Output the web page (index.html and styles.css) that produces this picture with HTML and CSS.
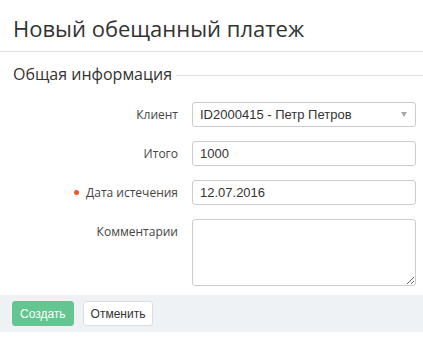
FILE: index.html
```
<!DOCTYPE html>
<html>
<head>
    <meta charset="utf-8">
    <title>Новый обещанный платеж</title>
    <link rel="stylesheet" href="styles.css">
</head>
<body>
<h1 class="pageTitle">Новый обещанный платеж</h1>
<div class="section">
    <div class="legend">Общая информация</div>
    <div class="formRow">
        <label class="rowLabel">Клиент</label>
        <div class="selectBox">
            <span>ID2000415 - Петр Петров</span>
            <i class="caret"></i>
        </div>
    </div>
    <div class="formRow">
        <label class="rowLabel">Итого</label>
        <input class="field" type="text" value="1000">
    </div>
    <div class="formRow">
        <label class="rowLabel required">Дата истечения</label>
        <input class="field" type="text" value="12.07.2016">
    </div>
    <div class="formRow">
        <label class="rowLabel">Комментарии</label>
        <textarea class="field area"></textarea>
    </div>
</div>
<div class="footer">
    <button class="btn btnGreen">Создать</button>
    <button class="btn">Отменить</button>
</div>
</body>
</html>
```
FILE: styles.css
```
* {
    box-sizing: border-box;
}

body {
    margin: 0;
    font-family: "Open Sans", sans-serif;
    color: #333;
    background: #fff;
}

.pageTitle {
    margin: 0;
    padding: 13px 13px 0;
    height: 52px;
    font-size: 22px;
    font-weight: normal;
    line-height: 30px;
    border-bottom: 1px solid #ddd;
}

.section {
    padding: 10px 7px 0 0;
}

.legend {
    display: flex;
    align-items: center;
    padding-left: 13px;
    font-size: 16px;
    line-height: 24px;
    margin-bottom: 16px;
}

.legend:after {
    content: "";
    flex: 1;
    height: 1px;
    background: #ddd;
    margin-left: 4px;
    margin-right: -7px;
    position: relative;
    top: 1px;
}

.formRow {
    display: grid;
    grid-template-columns: 178px 1fr;
    column-gap: 14px;
    margin-bottom: 14px;
}

.formRow:last-child {
    margin-bottom: 9px;
}

.rowLabel {
    text-align: right;
    font-size: 12px;
    line-height: 25px;
    color: #444;
}

.rowLabel.required:before {
    content: "";
    display: inline-block;
    width: 5px;
    height: 5px;
    border-radius: 50%;
    background: #f0542d;
    margin-right: 7px;
    vertical-align: 2px;
}

.field,
.selectBox {
    height: 25px;
    border: 1px solid #ccc;
    border-radius: 3px;
    padding: 0 7px;
    font-family: "Liberation Sans", Arial, sans-serif;
    font-size: 13px;
    color: #333;
    background: #fff;
}

.selectBox {
    display: flex;
    align-items: center;
    justify-content: space-between;
}

.caret {
    width: 0;
    height: 0;
    border-left: 3px solid transparent;
    border-right: 3px solid transparent;
    border-top: 5px solid #aaa;
    margin-right: 1px;
}

.area {
    height: 67px;
    resize: vertical;
    padding-top: 4px;
}

.footer {
    background: #eff2f5;
    padding: 6px 12px;
    display: flex;
    gap: 9px;
}

.btn {
    height: 25px;
    padding: 0 7px;
    border: 1px solid #ddd;
    border-radius: 3px;
    background: #fff;
    font-family: "Liberation Sans", Arial, sans-serif;
    font-size: 12px;
    color: #333;
}

.btnGreen {
    background: #63c58f;
    border-color: #63c58f;
    color: #fff;
}
```
